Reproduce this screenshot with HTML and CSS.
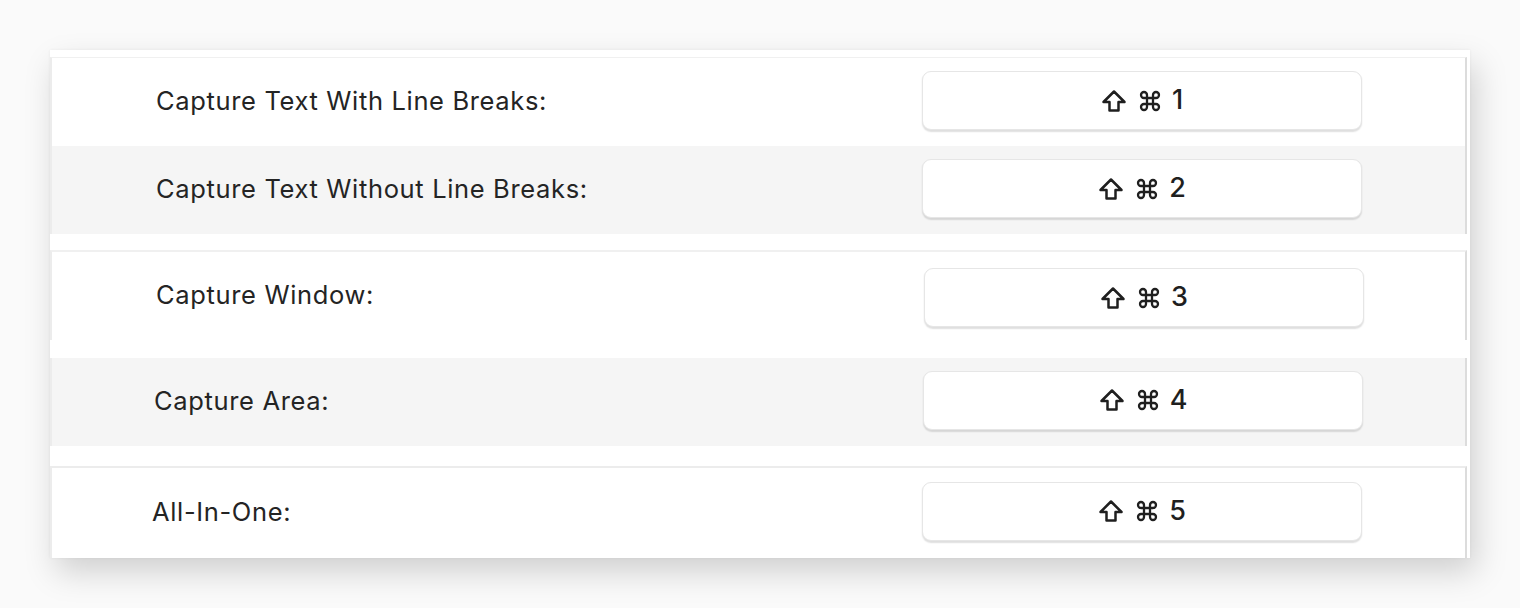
FILE: index.html
```html
<!DOCTYPE html>
<html>
<head>
<meta charset="utf-8">
<link rel="stylesheet" href="styles.css">
</head>
<body>
<div class="panel">
  <div class="row first">
    <div class="label l156">Capture Text With Line Breaks:</div>
    <div class="key k1"><svg class="shift" viewBox="0 0 26 24"><path d="M13 2.5 L23.5 13 H17.5 V21.5 H8.5 V13 H2.5 Z"/></svg><svg class="cmd" viewBox="0 0 24 24"><path d="M15 6v12a3 3 0 1 0 3-3H6a3 3 0 1 0 3 3V6a3 3 0 1 0-3 3h12a3 3 0 1 0-3-3"/></svg><span class="num">1</span></div>
  </div>
  <div class="row gray r2">
    <div class="label l156">Capture Text Without Line Breaks:</div>
    <div class="key k2"><svg class="shift" viewBox="0 0 26 24"><path d="M13 2.5 L23.5 13 H17.5 V21.5 H8.5 V13 H2.5 Z"/></svg><svg class="cmd" viewBox="0 0 24 24"><path d="M15 6v12a3 3 0 1 0 3-3H6a3 3 0 1 0 3 3V6a3 3 0 1 0-3 3h12a3 3 0 1 0-3-3"/></svg><span class="num">2</span></div>
  </div>
  <div class="gap g1"></div>
  <div class="row boxed r3">
    <div class="label l156">Capture Window:</div>
    <div class="key k3"><svg class="shift" viewBox="0 0 26 24"><path d="M13 2.5 L23.5 13 H17.5 V21.5 H8.5 V13 H2.5 Z"/></svg><svg class="cmd" viewBox="0 0 24 24"><path d="M15 6v12a3 3 0 1 0 3-3H6a3 3 0 1 0 3 3V6a3 3 0 1 0-3 3h12a3 3 0 1 0-3-3"/></svg><span class="num">3</span></div>
  </div>
  <div class="gap g2"></div>
  <div class="row gray r4">
    <div class="label l154">Capture Area:</div>
    <div class="key k4"><svg class="shift" viewBox="0 0 26 24"><path d="M13 2.5 L23.5 13 H17.5 V21.5 H8.5 V13 H2.5 Z"/></svg><svg class="cmd" viewBox="0 0 24 24"><path d="M15 6v12a3 3 0 1 0 3-3H6a3 3 0 1 0 3 3V6a3 3 0 1 0-3 3h12a3 3 0 1 0-3-3"/></svg><span class="num">4</span></div>
  </div>
  <div class="gap g3"></div>
  <div class="row boxed r5">
    <div class="label l152">All-In-One:</div>
    <div class="key k5"><svg class="shift" viewBox="0 0 26 24"><path d="M13 2.5 L23.5 13 H17.5 V21.5 H8.5 V13 H2.5 Z"/></svg><svg class="cmd" viewBox="0 0 24 24"><path d="M15 6v12a3 3 0 1 0 3-3H6a3 3 0 1 0 3 3V6a3 3 0 1 0-3 3h12a3 3 0 1 0-3-3"/></svg><span class="num">5</span></div>
  </div>
</div>
</body>
</html>
```
FILE: styles.css
```css
html, body {
  margin: 0;
  padding: 0;
}
body {
  background: #fafafa;
  width: 1520px;
  height: 608px;
  overflow: hidden;
  padding-top: 50px;
  box-sizing: border-box;
  font-family: Inter, "Liberation Sans", sans-serif;
}
.panel {
  margin-left: 50px;
  width: 1420px;
  height: 508px;
  background: #fff;
  box-shadow: 6px 14px 30px rgba(0,0,0,0.17), 0 0 3px rgba(0,0,0,0.06);
  padding-top: 7px;
  box-sizing: border-box;
  display: flex;
  flex-direction: column;
}
.row {
  display: flex;
  align-items: center;
  justify-content: space-between;
  width: 1417px;
  box-sizing: border-box;
  border-right: 2px solid #dcdcdc;
  border-left: 2px solid #ececec;
}
.row.first {
  height: 89px;
  border-top: 1px solid #f0f0f0;
}
.row.gray {
  background: #f5f5f5;
}
.r2 { height: 88px; }
.r3 { height: 90px; border-top: 2px solid #f0f0f0; }
.r4 { height: 88px; }
.r5 { height: 92px; border-top: 2px solid #ececec; }
.gap { flex: none; }
.g1 { height: 16px; }
.g2 { height: 18px; }
.g3 { height: 20px; }
.label {
  font-size: 25.5px;
  color: #242424;
  letter-spacing: 0.65px;
  margin-top: -3px;
}
.l156 { margin-left: 104px; }
.l154 { margin-left: 102px; }
.l152 { margin-left: 100px; }
.key {
  width: 440px;
  height: 59px;
  margin-right: 103px;
  background: #fff;
  border: 1px solid #e6e6e6;
  border-radius: 9px;
  box-shadow: 0 1.5px 1.5px rgba(0,0,0,0.13);
  box-sizing: border-box;
  display: flex;
  align-items: center;
  justify-content: center;
  color: #1f1f1f;
}
.k1 { margin-top: -3px; }
.k2 { margin-top: -3px; }
.k3 { margin-right: 101px; margin-top: 3px; }
.k4 { margin-right: 102px; margin-top: -4px; }
.k5 { margin-top: -4px; }
.shift {
  width: 26px;
  height: 24px;
  fill: none;
  stroke: #1f1f1f;
  stroke-width: 2.5;
  stroke-linejoin: round;
  margin-right: 11px;
}
.cmd {
  width: 24px;
  height: 24px;
  fill: none;
  stroke: #1f1f1f;
  stroke-width: 2.3;
  margin-right: 10px;
}
.num {
  font-size: 27px;
  font-weight: 500;
  line-height: 1;
  margin-top: -2px;
}
```
